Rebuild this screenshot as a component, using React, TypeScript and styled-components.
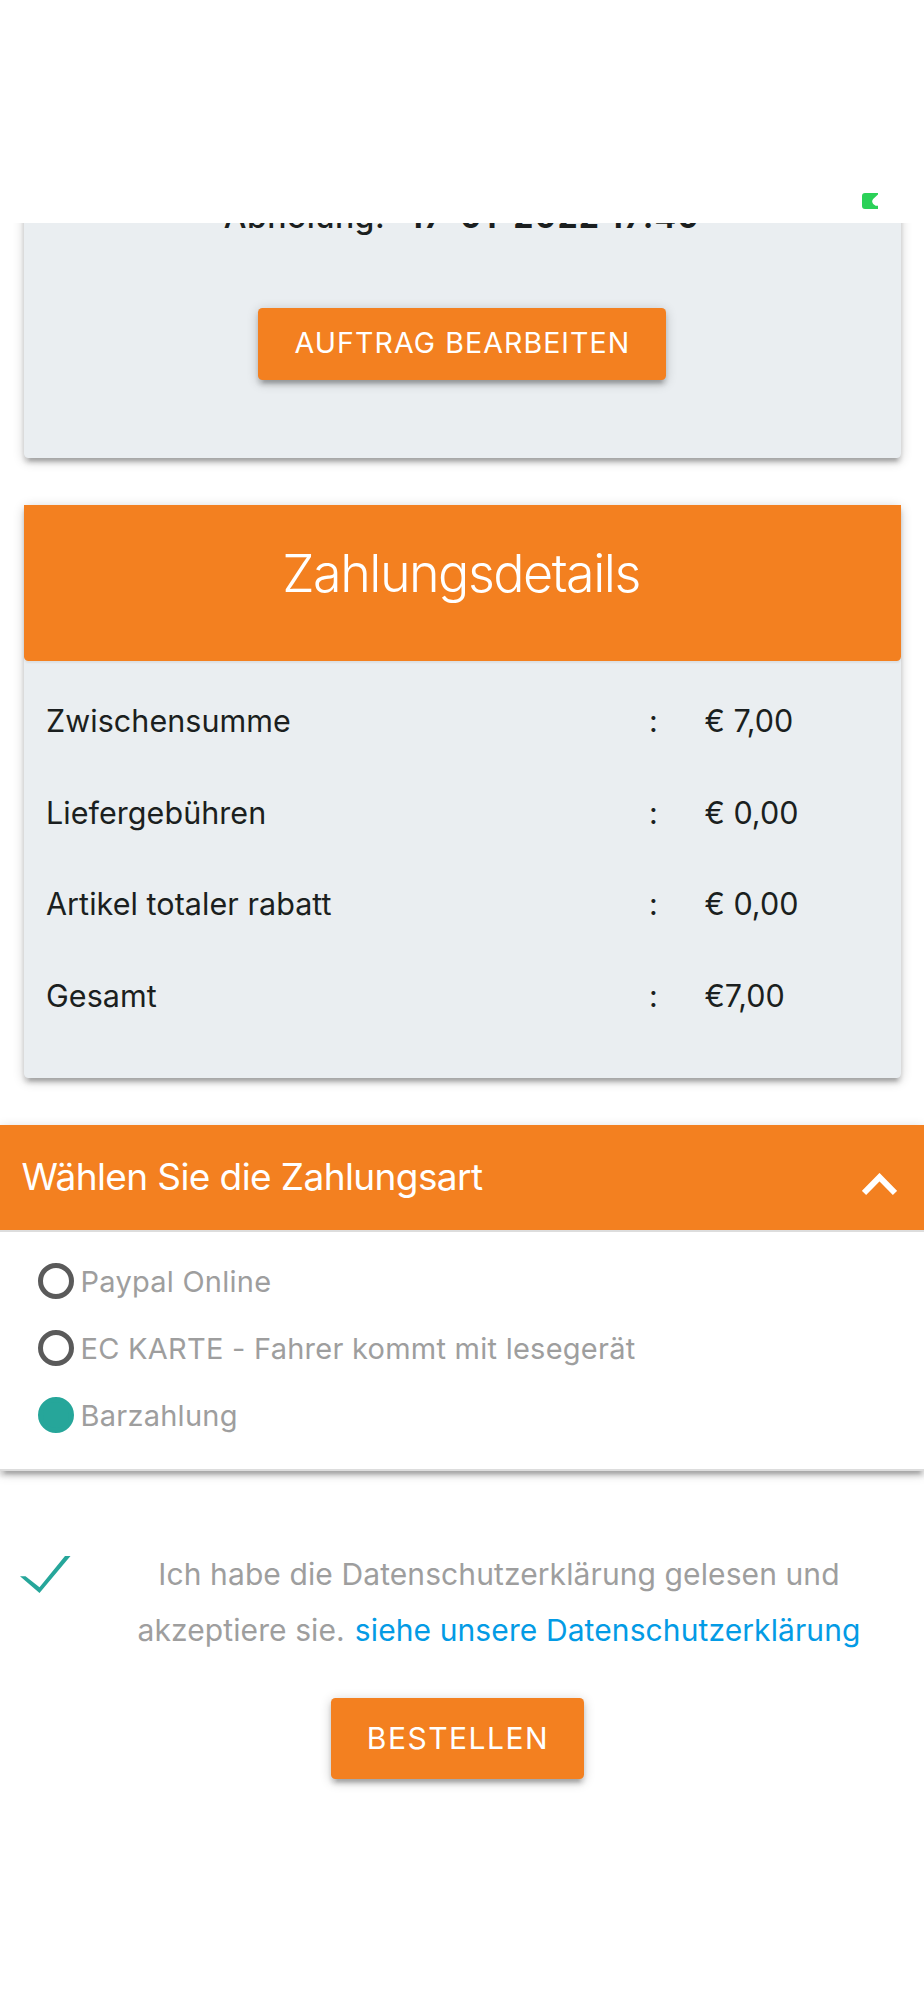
import React, { useState } from "react";
import styled, { createGlobalStyle } from "styled-components";

const orange = "#f38020";
const teal = "#26a69a";
const elevation =
  "0 4.5px 4.5px 0 rgba(0,0,0,.14), 0 7px 2.5px -4.5px rgba(0,0,0,.12), 0 2.5px 11.5px 0 rgba(0,0,0,.2)";

const GlobalStyle = createGlobalStyle`
  * { box-sizing: border-box; }
  body {
    margin: 0;
    background: #fff;
    font-family: Inter, "Liberation Sans", sans-serif;
    font-weight: 400;
  }
`;

const Page = styled.div`
  display: flex;
  flex-direction: column;
  height: 2000px;
  overflow: hidden;
`;

const StatusBar = styled.div`
  display: flex;
  flex: none;
  justify-content: flex-end;
  height: 223px;
  padding: 193px 45px 0 0;
`;

const Viewport = styled.main`
  flex: 1;
  min-height: 0;
  overflow: hidden;
`;

const Card = styled.section<{ $clipped?: boolean }>`
  display: flex;
  flex-direction: column;
  margin: ${(p) => (p.$clipped ? "-36px" : "47px")} 23px 0 24px;
  border-radius: 4.5px;
  background: #eaeef1;
  color: #1b1f20;
  box-shadow: ${elevation};
`;

const PickupCard = styled(Card)`
  height: 271px;
  align-items: center;
`;

const Pickup = styled.div`
  display: flex;
  gap: 24px;
  margin: 0 1px 62px 0;
  font-size: 32px;
  line-height: 59px;
  font-weight: 500;
  letter-spacing: 0.45px;
  white-space: nowrap;

  strong {
    font-weight: 700;
    letter-spacing: 1.2px;
  }
`;

const Button = styled.button<{ $large?: boolean }>`
  flex: none;
  width: ${(p) => (p.$large ? 253 : 408)}px;
  height: ${(p) => (p.$large ? 81 : 72)}px;
  margin-right: ${(p) => (p.$large ? 0 : 1)}px;
  padding: 0 0 ${(p) => (p.$large ? 0 : 3)}px 1px;
  border: 0;
  border-radius: 4.5px;
  background: ${orange};
  color: #fff;
  font-family: inherit;
  font-size: ${(p) => (p.$large ? 30 : 28.5)}px;
  letter-spacing: ${(p) => (p.$large ? 1.5 : 1.1)}px;
  white-space: nowrap;
  box-shadow: ${elevation};
`;

const CardTitle = styled.h2`
  height: 156px;
  margin: 0;
  padding-right: 3px;
  border-radius: 0 0 4.5px 4.5px;
  background: ${orange};
  color: #fff;
  font-size: 52px;
  font-weight: 300;
  line-height: 137px;
  letter-spacing: -1.5px;
  text-align: center;
  box-shadow: 0 2px 2px rgba(0, 0, 0, 0.06);
`;

const Totals = styled.div`
  padding: 14px 22px 36.6px 22px;
`;

const TotalRow = styled.div`
  display: grid;
  grid-template-columns: 603px 55.5px 1fr;
  font-size: 30.5px;
  line-height: 91.6px;
  letter-spacing: 0.05px;
  white-space: nowrap;
`;

const Amount = styled.span`
  letter-spacing: 0;
`;

const Payment = styled.section`
  margin-top: 47px;
  border-bottom: 2px solid #ddd;
  background: #fff;
  box-shadow: ${elevation};
`;

const PaymentHeader = styled.header`
  display: flex;
  justify-content: space-between;
  height: 107px;
  padding: 0 27px 0 21.5px;
  border-bottom: 2px solid #ddd;
  background: ${orange};
  background-clip: padding-box;
  color: #fff;
  font-size: 37px;
  line-height: 103px;
  letter-spacing: -0.6px;
`;

const Chevron = styled.svg`
  margin-top: 48px;
`;

const Options = styled.div`
  padding: 16px 0 20px 37.5px;
`;

const Option = styled.label`
  display: flex;
  align-items: center;
  height: 67px;
  color: #9e9e9e;
  font-size: 29px;
  line-height: 67px;
  letter-spacing: 0.25px;
`;

const Radio = styled.span<{ $checked: boolean }>`
  width: 36px;
  height: 36px;
  margin-right: 7px;
  border: 5px solid ${(p) => (p.$checked ? teal : "#5a5a5a")};
  border-radius: 50%;
  background: ${(p) => (p.$checked ? teal : "transparent")};
`;

const Consent = styled.div`
  display: flex;
  align-items: flex-start;
  margin-top: 75px;
`;

const Check = styled.svg`
  flex: none;
  margin: 9px 3px 0 19px;
`;

const ConsentText = styled.p`
  flex: 1;
  margin: 0;
  color: #9e9e9e;
  font-size: 30px;
  line-height: 56px;
  letter-spacing: 0.1px;
  text-align: center;
  white-space: nowrap;
`;

const Link = styled.a`
  margin-left: 1.5px;
  color: #039be5;
  text-decoration: none;
`;

const Actions = styled.div`
  display: flex;
  justify-content: center;
  padding: 40px 9px 0 0;
`;

const totals = [
  ["Zwischensumme", "€ 7,00"],
  ["Liefergebühren", "€ 0,00"],
  ["Artikel totaler rabatt", "€ 0,00"],
  ["Gesamt", "€7,00"],
];

const methods = [
  "Paypal Online",
  "EC KARTE - Fahrer kommt mit lesegerät",
  "Barzahlung",
];

export default function App() {
  const [method, setMethod] = useState(2);
  return (
    <Page>
      <GlobalStyle />
      <StatusBar>
        <svg width="17" height="16" viewBox="0 0 17 16">
          <path
            d="M3 0H16V1.4L11.4 5.8Q9 8.2 11.2 11L13.6 12.8H16V16H3Q0 16 0 13V3Q0 0 3 0Z"
            fill="#2bd158"
          />
        </svg>
      </StatusBar>
      <Viewport>
        <PickupCard $clipped>
          <Pickup>
            <span>Abholung:</span>
            <strong>17-01-2022 17:40</strong>
          </Pickup>
          <Button>AUFTRAG BEARBEITEN</Button>
        </PickupCard>

        <Card>
          <CardTitle>Zahlungsdetails</CardTitle>
          <Totals>
            {totals.map(([label, amount]) => (
              <TotalRow key={label}>
                <span>{label}</span>
                <span>:</span>
                <Amount>{amount}</Amount>
              </TotalRow>
            ))}
          </Totals>
        </Card>

        <Payment>
          <PaymentHeader>
            Wählen Sie die Zahlungsart
            <Chevron width="35" height="23" viewBox="0 0 35 23">
              <path d="M2 20L17.5 4.2L33 20" fill="none" stroke="#fff" strokeWidth="6" />
            </Chevron>
          </PaymentHeader>
          <Options>
            {methods.map((name, i) => (
              <Option key={name} onClick={() => setMethod(i)}>
                <Radio $checked={i === method} />
                {name}
              </Option>
            ))}
          </Options>
        </Payment>

        <Consent>
          <Check width="52" height="39" viewBox="0 0 52 39">
            <path d="M1 21.2H6.5L20.5 32.2L46 1H51.5L20.5 38Z" fill={teal} />
          </Check>
          <ConsentText>
            Ich habe die Datenschutzerklärung gelesen und
            <br />
            akzeptiere sie. <Link>siehe unsere Datenschutzerklärung</Link>
          </ConsentText>
        </Consent>
        <Actions>
          <Button $large>BESTELLEN</Button>
        </Actions>
      </Viewport>
    </Page>
  );
}
